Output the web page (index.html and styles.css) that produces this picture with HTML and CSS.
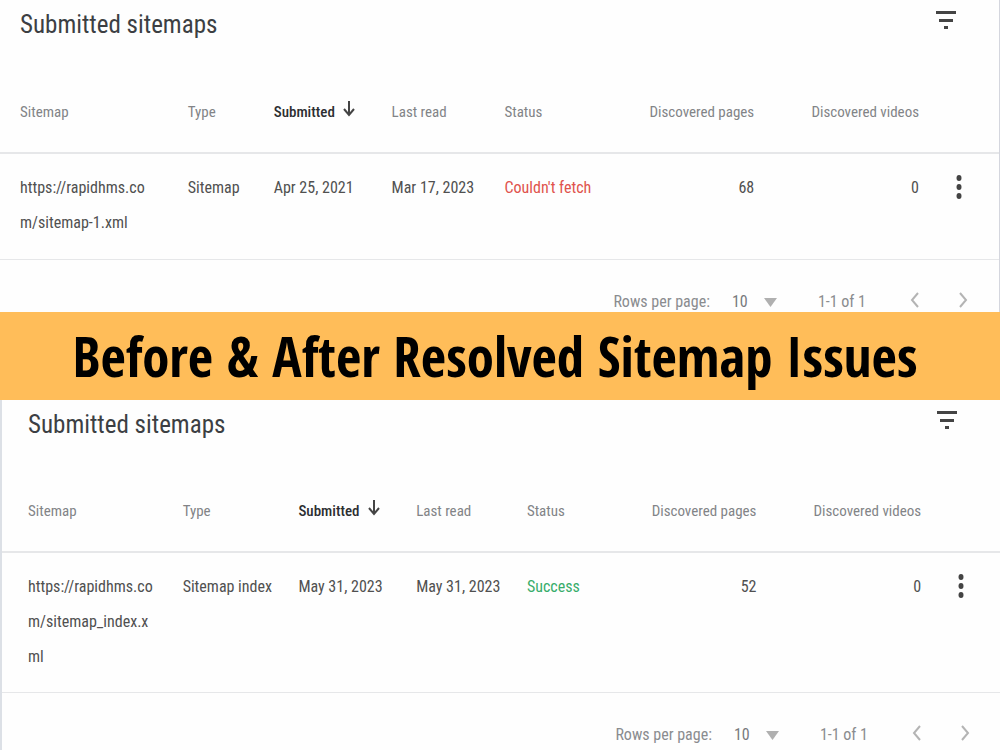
FILE: index.html
```html
<!DOCTYPE html>
<html lang="en">
<head>
<meta charset="utf-8">
<title>Before &amp; After Resolved Sitemap Issues</title>
<link rel="stylesheet" href="styles.css">
</head>
<body>
<section class="panel before">
  <header class="panel-head">
    <h2>Submitted sitemaps</h2>
    <button class="icon-btn" aria-label="Filter"><svg width="20" height="18" viewBox="0 0 20 18"><path d="M0 0h20v3H0zM3 8h14v3H3zM8 15h4v3H8z"/></svg></button>
  </header>
  <table>
    <colgroup><col class="c-map"><col class="c-type"><col class="c-sub"><col class="c-read"><col class="c-status"><col class="c-pages"><col class="c-videos"><col></colgroup>
    <thead><tr>
      <th>Sitemap</th><th>Type</th>
      <th class="sorted">Submitted <svg width="12" height="17" viewBox="0 0 12 17"><path d="M6 1v14M1 9l5 6 5-6"/></svg></th>
      <th>Last read</th><th>Status</th><th class="num">Discovered pages</th><th class="num">Discovered videos</th><th></th>
    </tr></thead>
    <tbody><tr>
      <td>https://rapidhms.co<wbr>m/sitemap-1.xml</td><td>Sitemap</td><td>Apr 25, 2021</td><td>Mar 17, 2023</td>
      <td class="error">Couldn't fetch</td><td class="num">68</td><td class="num">0</td>
      <td class="menu"><button class="icon-btn" aria-label="More options"><svg width="6" height="26" viewBox="0 0 6 26"><ellipse cx="3" cy="4" rx="2.5" ry="3"/><ellipse cx="3" cy="13" rx="2.5" ry="3"/><ellipse cx="3" cy="22" rx="2.5" ry="3"/></svg></button></td>
    </tr></tbody>
  </table>
  <footer class="pager">
    <label for="rows-before">Rows per page:</label>
    <span class="select"><select id="rows-before"><option>10</option><option>25</option></select><svg width="13" height="9" viewBox="0 0 13 9"><path d="M0 0h13L6.500 9z"/></svg></span>
    <span class="range">1-1 of 1</span>
    <button class="icon-btn chevron" aria-label="Previous page"><svg width="9" height="16" viewBox="0 0 9 16"><path d="M8 1L2 8l6 7"/></svg></button>
    <button class="icon-btn chevron" aria-label="Next page"><svg width="9" height="16" viewBox="0 0 9 16"><path d="M1 1l6 7-6 7"/></svg></button>
  </footer>
</section>

<h1 class="banner">Before &amp; After Resolved Sitemap Issues</h1>

<section class="panel after">
  <header class="panel-head">
    <h2>Submitted sitemaps</h2>
    <button class="icon-btn" aria-label="Filter"><svg width="20" height="18" viewBox="0 0 20 18"><path d="M0 0h20v3H0zM3 8h14v3H3zM8 15h4v3H8z"/></svg></button>
  </header>
  <table>
    <colgroup><col class="c-map"><col class="c-type"><col class="c-sub"><col class="c-read"><col class="c-status"><col class="c-pages"><col class="c-videos"><col></colgroup>
    <thead><tr>
      <th>Sitemap</th><th>Type</th>
      <th class="sorted">Submitted <svg width="12" height="17" viewBox="0 0 12 17"><path d="M6 1v14M1 9l5 6 5-6"/></svg></th>
      <th>Last read</th><th>Status</th><th class="num">Discovered pages</th><th class="num">Discovered videos</th><th></th>
    </tr></thead>
    <tbody><tr>
      <td>https://rapidhms.co<wbr>m/sitemap_index.x<wbr>ml</td><td>Sitemap index</td><td>May 31, 2023</td><td>May 31, 2023</td>
      <td class="success">Success</td><td class="num">52</td><td class="num">0</td>
      <td class="menu"><button class="icon-btn" aria-label="More options"><svg width="6" height="26" viewBox="0 0 6 26"><ellipse cx="3" cy="4" rx="2.5" ry="3"/><ellipse cx="3" cy="13" rx="2.5" ry="3"/><ellipse cx="3" cy="22" rx="2.5" ry="3"/></svg></button></td>
    </tr></tbody>
  </table>
  <footer class="pager">
    <label for="rows-after">Rows per page:</label>
    <span class="select"><select id="rows-after"><option>10</option><option>25</option></select><svg width="13" height="9" viewBox="0 0 13 9"><path d="M0 0h13L6.500 9z"/></svg></span>
    <span class="range">1-1 of 1</span>
    <button class="icon-btn chevron" aria-label="Previous page"><svg width="9" height="16" viewBox="0 0 9 16"><path d="M8 1L2 8l6 7"/></svg></button>
    <button class="icon-btn chevron" aria-label="Next page"><svg width="9" height="16" viewBox="0 0 9 16"><path d="M1 1l6 7-6 7"/></svg></button>
  </footer>
</section>
</body>
</html>
```
FILE: styles.css
```css
* { box-sizing: border-box; }
body {
  margin: 0;
  background: #fefefe;
  color: #505050;
  font: 16px/35px "Roboto Condensed", Roboto, sans-serif;
}
svg { display: block; fill: #444; }
.icon-btn { padding: 0; border: 0; background: none; cursor: pointer; }

.panel { --edge: 20px; background: #fefefe; }
.before { border-right: 1px solid #d4d6de; }
.after { --edge: 26px; border-left: 2px solid #dce0e6; }

.panel-head {
  display: flex;
  justify-content: space-between;
  align-items: center;
  height: 48px;
  padding: 0 43px 0 var(--edge);
}
.panel-head .icon-btn { padding-bottom: 8px; }
h2 { margin: 0; color: #3c3f43; font-size: 25px; font-weight: 400; }

table { width: 100%; table-layout: fixed; border-collapse: separate; border-spacing: 0; }
.c-map { width: 18.8%; }
.c-type { width: 8.6%; }
.c-sub { width: 11.8%; }
.c-read { width: 11.3%; }
.c-status { width: 11%; }
.c-pages { width: 14%; }
.c-videos { width: 16.5%; }
.after .c-map { width: 18.1%; }
.after .c-type { width: 11.6%; }
.after .c-read { width: 11.1%; }
.after .c-pages { width: 12%; }

th, td { padding: 0; text-align: left; vertical-align: top; border-bottom: 2px solid #e6e7e9; }
th { padding: 47px 0 22px; color: #828487; font-size: 15px; font-weight: 400; white-space: nowrap; }
td { padding: 16px 0 19px; border-bottom-width: 1px; }
.after th { padding-top: 46px; }
.after td { padding-bottom: 18px; }
th:first-child, td:first-child { padding-left: var(--edge); padding-right: 22px; }
.num { text-align: right; }
.num + .num { padding-left: 20px; }
.sorted { color: #2c2e31; font-weight: 500; }
.sorted svg { display: inline-block; margin-left: 5px; fill: none; stroke: #444; stroke-width: 2; }
.error { color: #e0534d; }
.success { color: #38ad6b; }
.menu .icon-btn { display: block; margin-left: 37px; padding-top: 4px; }

.pager {
  display: flex;
  justify-content: flex-end;
  align-items: center;
  padding: 27px 31px 0 0;
  color: #8a8c8f;
  line-height: 30px;
}
.after .pager { padding-right: 30px; }
.pager .icon-btn { padding-bottom: 4px; }
.select { position: relative; margin-left: 22px; }
.select svg { position: absolute; right: 0; top: 11px; fill: #b0b0b0; pointer-events: none; }
select {
  display: block;
  appearance: none;
  width: 45px;
  padding: 0;
  border: 0;
  background: none;
  color: #77797c;
  font: inherit;
}
.range { margin: 0 44px 0 41px; }
.chevron svg { fill: none; stroke: #b4b4b4; stroke-width: 2; }
.chevron + .chevron { margin-left: 40px; }

.banner {
  position: relative;
  margin: -5px 0 0;
  padding: 0 20px 0 10px;
  background: #ffbd59;
  color: #000;
  text-align: center;
  white-space: nowrap;
  font: 700 55px/88px "Noto Sans Condensed", "Open Sans Condensed", "Roboto Condensed", Roboto, sans-serif;
}
```
